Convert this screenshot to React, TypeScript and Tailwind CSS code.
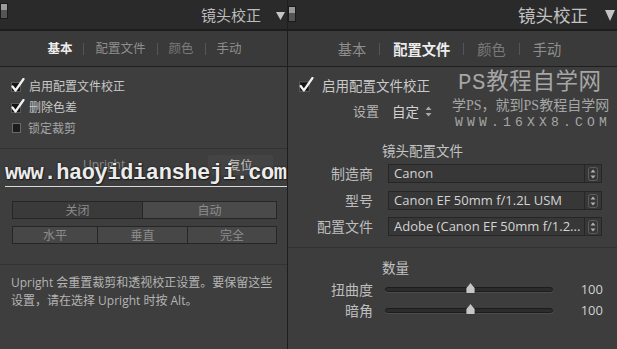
import React from "react";

const CJK = '"Noto Sans CJK SC", sans-serif';
const UI = '"Open Sans", "Noto Sans CJK SC", sans-serif';

function HeaderIcon() {
  return (
    <div className="flex h-[16px] w-[8px] flex-col border border-[#1a1a1a] bg-[#4a4a4a]">
      <div className="h-[6px] bg-[#9a9a9a]" />
      <div className="flex-1 bg-[#555555]" />
    </div>
  );
}

function Tri({ w, h }: { w: number; h: number }) {
  return (
    <svg width={w} height={h} viewBox={`0 0 ${w} ${h}`}>
      <polygon points={`0,0 ${w},0 ${w / 2},${h}`} fill="#c4c4c4" />
    </svg>
  );
}

function Check({ size = 15 }: { size?: number }) {
  return (
    <svg width={size} height={size} viewBox="0 0 15 15">
      <rect x="1.5" y="4.5" width="9" height="9" fill="#141414" stroke="#5a5a5a" />
      <path d="M2.5 8.5 L5.5 12.5 L13.5 1" stroke="#f2f2f2" strokeWidth="2.2" fill="none" strokeLinecap="round" strokeLinejoin="round" />
    </svg>
  );
}

function Updown() {
  return (
    <svg width="10" height="14" viewBox="0 0 10 14">
      <rect x="0.5" y="0.5" width="9" height="13" rx="2" fill="none" stroke="#5c5c5c" />
      <polygon points="2.5,5.5 7.5,5.5 5,2.5" fill="#b0b0b0" />
      <polygon points="2.5,8.5 7.5,8.5 5,11.5" fill="#b0b0b0" />
    </svg>
  );
}

function Sep({ h = 10 }: { h?: number }) {
  return <div className="w-px bg-[#555555]" style={{ height: h }} />;
}

function Tabs({ active, size, gap }: { active: number; size: number; gap: number }) {
  const names = ["基本", "配置文件", "颜色", "手动"];
  const colors = ["#8e8e8e", "#8e8e8e", "#7a7a7a", "#8e8e8e"];
  return (
    <div className="flex items-center justify-center" style={{ gap }}>
      {names.map((n, i) => (
        <React.Fragment key={n}>
          {i > 0 && <Sep h={12} />}
          <span
            className={i === active ? "font-bold" : ""}
            style={{ fontSize: size, color: i === active ? "#ededed" : colors[i] }}
          >
            {n}
          </span>
        </React.Fragment>
      ))}
    </div>
  );
}

function Select({ text }: { text: string }) {
  return (
    <div className="flex h-[19px] w-[214px] border border-[#262626] bg-[#373737]">
      <div className="flex-1 overflow-hidden whitespace-nowrap pl-[5px] text-[13px] leading-[17px] text-[#d4d4d4]" style={{ fontFamily: UI }}>
        {text}
      </div>
      <div className="flex w-[17px] items-center justify-center border-l border-[#262626]">
        <Updown />
      </div>
    </div>
  );
}

function Slider({ label }: { label: string }) {
  return (
    <div className="flex h-[21px] items-center">
      <div className="w-[85px] text-right text-[14px] text-[#bdbdbd]">{label}</div>
      <div className="relative ml-[12px] h-[5px] w-[168px] rounded-full border border-[#1c1c1c] bg-[#2c2c2c] shadow-[0_1px_0_#4c4c4c]">
        <svg className="absolute left-[79px] top-[-6px]" width="11" height="12" viewBox="0 0 11 12">
          <path d="M5.5 0.5 L10 6 L10 11.5 L1 11.5 L1 6 Z" fill="#c6c6c6" stroke="#2a2a2a" strokeWidth="0.8" />
        </svg>
      </div>
      <div className="flex-1 pr-[14px] text-right text-[13px] text-[#d0d0d0]" style={{ fontFamily: UI }}>100</div>
    </div>
  );
}

export default function App() {
  return (
    <div className="flex h-[349px] w-[617px] overflow-hidden bg-[#3d3d3d] text-[#bdbdbd]" style={{ fontFamily: CJK }}>
      {/* LEFT PANEL */}
      <div className="relative flex w-[287px] flex-col">
        <div className="flex h-[29px] items-start bg-[#2a2a2a]">
          <div className="mt-[3px]"><HeaderIcon /></div>
          <div className="ml-auto mt-[4px] flex items-center pr-[2px]">
            <span className="text-[15px] leading-[22px] text-[#bcbcbc]">镜头校正</span>
            <span className="ml-[15px] mt-[1px]"><Tri w={9} h={8} /></span>
          </div>
        </div>
        <div className="h-[2px] bg-[#1d1d1d]" />
        <div className="flex h-[35px] items-center justify-center bg-[#3a3a3a]">
          <div className="ml-[2px]"><Tabs active={0} size={12.5} gap={11} /></div>
        </div>
        <div className="h-px bg-[#1f1f1f]" />
        <div className="flex flex-1 flex-col bg-[#3e3e3e]">
          <div className="px-[10px] pt-[8px] text-[12px]">
            <div className="flex h-[21px] items-center gap-[4px]">
              <Check />
              <span className="text-[#c8c8c8]">启用配置文件校正</span>
            </div>
            <div className="flex h-[21px] items-center gap-[4px]">
              <Check />
              <span className="text-[#c8c8c8]">删除色差</span>
            </div>
            <div className="flex h-[21px] items-center gap-[7px] pl-[2px]">
              <div className="h-[10px] w-[9px] border border-[#6a6a6a] bg-[#1c1c1c]" />
              <span className="text-[#a6a6a6]">锁定裁剪</span>
            </div>
          </div>
          <div className="mt-[10px] h-px bg-[#333333]" />
          <div className="mt-[6px] flex h-[20px] items-center pl-[83px] pr-[14px]">
            <span className="text-[12px] text-[#8a8a8a]" style={{ fontFamily: UI }}>Upright</span>
            <div className="ml-auto flex h-[20px] w-[65px] items-center justify-center rounded-[2px] bg-[#444444]">
              <span className="text-[12px] text-[#c4c4c4]">复位</span>
            </div>
          </div>
          <div className="ml-[12px] mt-[26px] flex h-[18px] w-[265px] text-[12px] text-[#8c8c8c]">
            <div className="flex w-[131px] items-center justify-center border border-[#262626] bg-[#3a3a3a]">关闭</div>
            <div className="flex flex-1 items-center justify-center border border-l-0 border-[#262626] bg-[#4a4a4a]">自动</div>
          </div>
          <div className="ml-[12px] mt-[7px] flex h-[18px] w-[265px] text-[12px] text-[#8c8c8c]">
            <div className="flex w-[86px] items-center justify-center border border-[#262626] bg-[#474747]">水平</div>
            <div className="flex w-[90px] items-center justify-center border border-l-0 border-[#262626] bg-[#474747]">垂直</div>
            <div className="flex flex-1 items-center justify-center border border-l-0 border-[#262626] bg-[#474747]">完全</div>
          </div>
          <div className="mt-[20px] h-px bg-[#333333]" />
          <div className="mt-[9px] pl-[11px] pr-[8px] text-[12px] leading-[18px] text-[#b4b4b4]" style={{ fontFamily: UI }}>
            <div>Upright 会重置裁剪和透视校正设置。要保留这些</div>
            <div>设置，请在选择 Upright 时按 Alt。</div>
          </div>
        </div>
        {/* watermark */}
        <div className="absolute left-[5px] top-[163px] w-[282px] border-b border-[#d8d8d8] pb-[1px]">
          <div
            className="whitespace-nowrap text-[22px] font-bold leading-[22px] tracking-[-0.4px] text-[#ececec]"
            style={{ fontFamily: '"Liberation Mono", monospace', textShadow: "0 0 2px #111, 1px 1px 1px #222" }}
          >
            www.haoyidiansheji.com
          </div>
        </div>
      </div>

      <div className="w-px bg-[#1e1e1e]" />

      {/* RIGHT PANEL */}
      <div className="relative flex flex-1 flex-col">
        <div className="flex h-[29px] items-start bg-[#2a2a2a]">
          <div className="mt-[6px]"><HeaderIcon /></div>
          <div className="ml-auto mt-[3px] flex items-center pr-[2px]">
            <span className="text-[17.5px] leading-[24px] text-[#c2c2c2]">镜头校正</span>
            <span className="ml-[17px] mt-[1px]"><Tri w={10} h={11} /></span>
          </div>
        </div>
        <div className="h-[2px] bg-[#1d1d1d]" />
        <div className="flex h-[35px] items-center justify-center bg-[#3a3a3a]">
          <div className="mr-[6px]"><Tabs active={1} size={14.25} gap={13} /></div>
        </div>
        <div className="h-px bg-[#1f1f1f]" />
        <div className="flex flex-1 flex-col bg-[#3d3d3d]">
          <div className="mt-[8px] flex h-[20px] items-center gap-[8px] pl-[10px]">
            <Check size={16} />
            <span className="text-[13.5px] text-[#cacaca]">启用配置文件校正</span>
          </div>
          <div className="mt-[6px] flex h-[20px] items-center">
            <div className="w-[91px] text-right text-[13px] text-[#b4b4b4]">设置</div>
            <div className="ml-[13px] flex items-center gap-[6px]">
              <span className="text-[13.5px] text-[#d2d2d2]">自定</span>
              <svg width="7" height="11" viewBox="0 0 7 11">
                <polygon points="0.5,4 6.5,4 3.5,0.5" fill="#a8a8a8" />
                <polygon points="0.5,7 6.5,7 3.5,10.5" fill="#a8a8a8" />
              </svg>
            </div>
          </div>
          <div className="mt-[20px] h-[18px] pl-[94px] text-[13.5px] leading-[18px] text-[#c4c4c4]">镜头配置文件</div>
          <div className="mt-[5px] flex h-[19px] items-center">
            <div className="w-[85px] text-right text-[14px] text-[#bdbdbd]">制造商</div>
            <div className="ml-[15px]"><Select text="Canon" /></div>
          </div>
          <div className="mt-[8px] flex h-[19px] items-center">
            <div className="w-[85px] text-right text-[14px] text-[#bdbdbd]">型号</div>
            <div className="ml-[15px]"><Select text="Canon EF 50mm f/1.2L USM" /></div>
          </div>
          <div className="mt-[7px] flex h-[19px] items-center">
            <div className="w-[85px] text-right text-[14px] text-[#bdbdbd]">配置文件</div>
            <div className="ml-[15px]"><Select text="Adobe (Canon EF 50mm f/1.2..." /></div>
          </div>
          <div className="mt-[11px] h-px bg-[#323232]" />
          <div className="mt-[10px] h-[18px] pl-[94px] text-[13.5px] leading-[18px] text-[#c4c4c4]">数量</div>
          <div className="mt-[3px]">
            <Slider label="扭曲度" />
            <Slider label="暗角" />
          </div>
        </div>
        {/* watermark */}
        <div className="absolute left-[170px] top-[69px] flex flex-col items-start text-[#a6a6a6]">
          <div
            className="whitespace-nowrap text-[22.5px] leading-[28px] tracking-[0.6px]"
            style={{ fontFamily: '"Liberation Mono", "Noto Sans CJK SC", monospace' }}
          >
            PS教程自学网
          </div>
          <div className="-ml-[6px] whitespace-nowrap text-[14px] leading-[18px]" style={{ fontFamily: '"Liberation Serif", "Noto Sans CJK SC", serif' }}>
            学PS，就到PS教程自学网
          </div>
          <div
            className="-ml-[3px] whitespace-nowrap text-[13px] leading-[16px] tracking-[4.2px]"
            style={{ fontFamily: '"Liberation Mono", monospace' }}
          >
            WWW.16XX8.COM
          </div>
        </div>
      </div>
    </div>
  );
}
